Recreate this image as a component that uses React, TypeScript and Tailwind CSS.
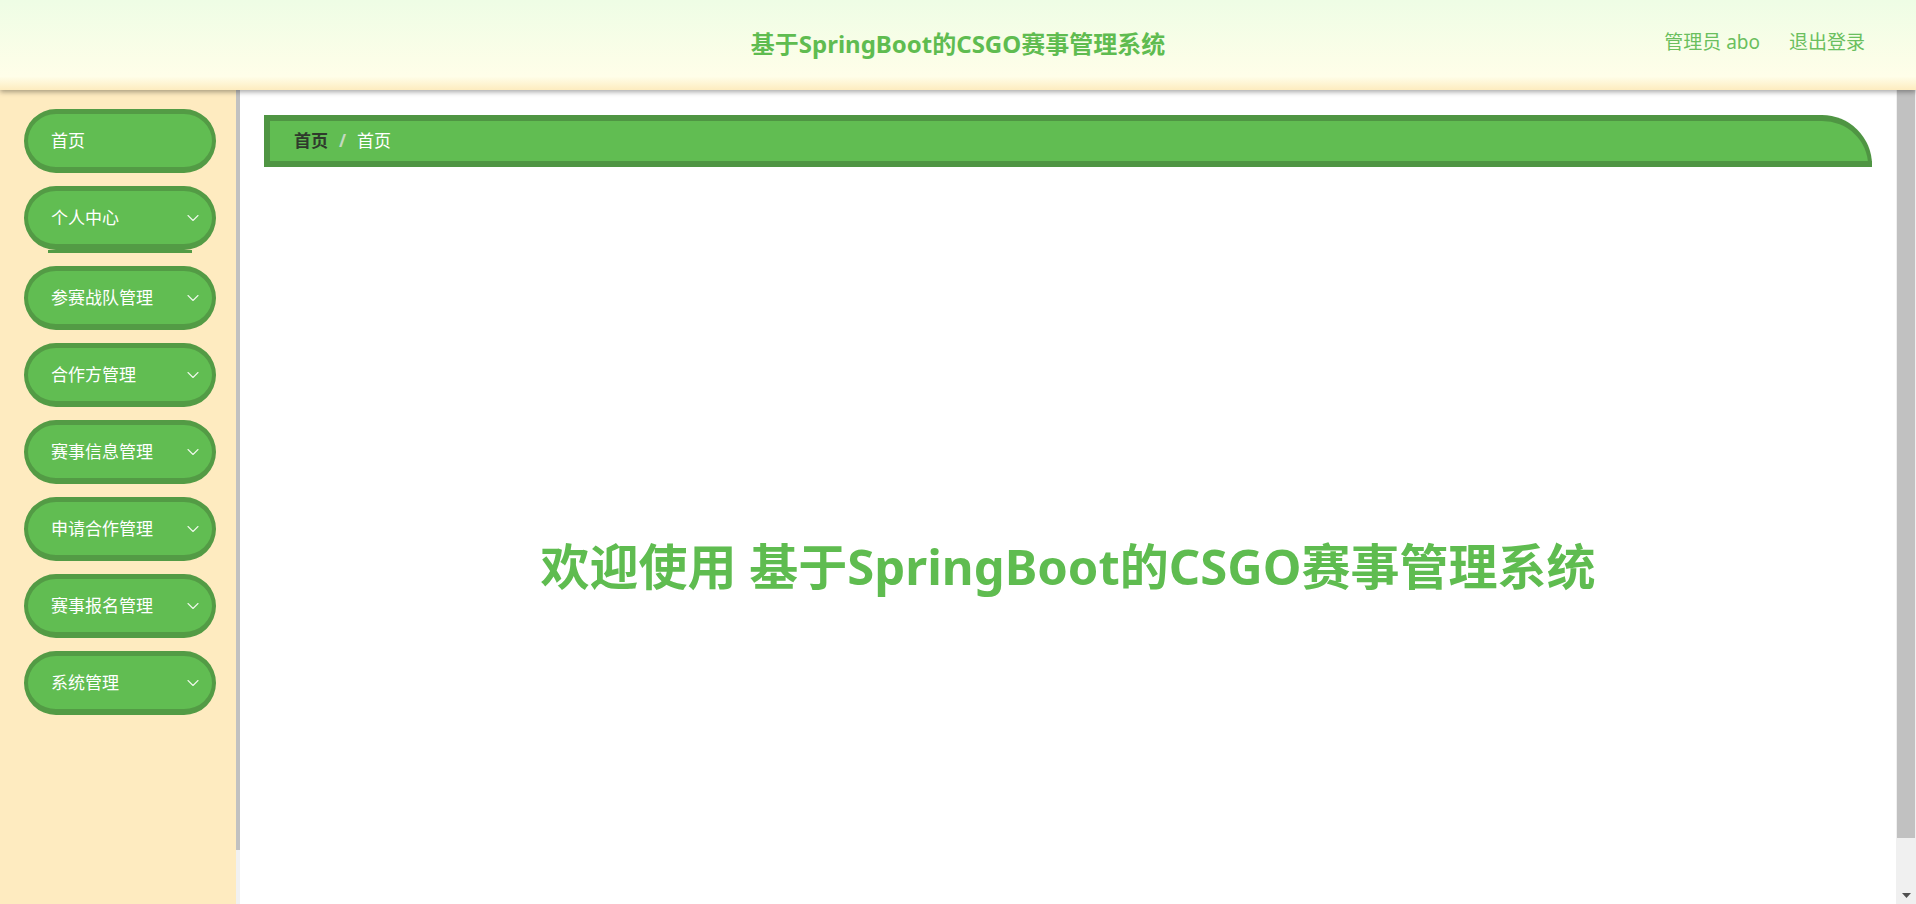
import { ChevronDown } from "lucide-react";

const menus = [
    { name: "首页", sub: false },
    { name: "个人中心", sub: true, line: true },
    { name: "参赛战队管理", sub: true },
    { name: "合作方管理", sub: true },
    { name: "赛事信息管理", sub: true },
    { name: "申请合作管理", sub: true },
    { name: "赛事报名管理", sub: true },
    { name: "系统管理", sub: true },
];

const font = { fontFamily: '"Noto Sans", "Noto Sans CJK SC", sans-serif' };

const App = () => {
    return (
        <div className="h-screen flex flex-col overflow-hidden bg-white" style={font}>
            <header className="relative z-10 h-[90px] shrink-0 flex items-center justify-center bg-gradient-to-b from-[#eefde5] via-[#fffee9] via-85% to-[#fdecbf] shadow-[0_2px_5px_rgba(0,0,0,0.35)]">
                <h1 className="text-[24px] font-bold text-[#5fbc50] -mt-[2px]">
                    基于SpringBoot的CSGO赛事管理系统
                </h1>
                <div className="absolute right-[51px] top-0 h-full flex items-center gap-[29px] text-[19px] text-[#6abf5e] -mt-[3px]">
                    <span>管理员 abo</span>
                    <span className="cursor-pointer">退出登录</span>
                </div>
            </header>

            <div className="flex flex-1 min-h-0">
                {/* sidebar */}
                <aside className="w-[240px] shrink-0 flex bg-[#feebc0]">
                    <div className="w-[236px] overflow-hidden">
                        <ul className="flex flex-col gap-[13px] pt-[19px] pl-[24px] pr-[20px]">
                            {menus.map((m) => (
                                <li key={m.name}>
                                    <div className="h-[64px] rounded-full border-x-[4px] border-t-[5px] border-b-[6px] border-[#539b45] bg-[#61bd52] flex items-center justify-between pl-[23px] pr-[9px] text-[17px] text-white cursor-pointer">
                                        <span>{m.name}</span>
                                        {m.sub && <ChevronDown size={20} strokeWidth={1.3} className="text-[#eef8ea]" />}
                                    </div>
                                    {m.line && <div className="mx-[24px] h-[3px] bg-[#539b45]" />}
                                </li>
                            ))}
                        </ul>
                    </div>
                    <div className="w-[4px] flex flex-col bg-[#f1f1f1]">
                        <div className="h-[760px] bg-[#c1c1c1]" />
                    </div>
                </aside>

                {/* main */}
                <main className="flex-1 flex min-w-0">
                    <div className="flex-1 min-w-0 overflow-hidden p-6 pt-[25px]">
                        <div className="h-[52px] flex items-center border-[6px] border-r-[4px] border-[#4f9543] bg-[#61bd52] rounded-tr-[50px] pl-[24px] text-[17px]">
                            <span className="font-bold text-[#2f3a2c]">首页</span>
                            <span className="mx-[11px] text-[#c4d9c0] font-bold">/</span>
                            <span className="text-white">首页</span>
                        </div>
                        <div className="h-[770px] pt-[29px] flex items-center justify-center">
                            <h2 className="text-[49px] font-bold text-[#5fbc50]">
                                欢迎使用 基于SpringBoot的CSGO赛事管理系统
                            </h2>
                        </div>
                    </div>
                    <div className="w-[20px] shrink-0 flex flex-col bg-[#f0f0f0]">
                        <div className="h-[748px] mx-[1px] bg-[#c1c1c1]" />
                        <div className="flex-1 flex items-end justify-center pb-[6px]">
                            <svg width="9" height="5" viewBox="0 0 9 5">
                                <path d="M0 0 L9 0 L4.5 5 Z" fill="#505050" />
                            </svg>
                        </div>
                    </div>
                </main>
            </div>
        </div>
    );
};

export default App;
